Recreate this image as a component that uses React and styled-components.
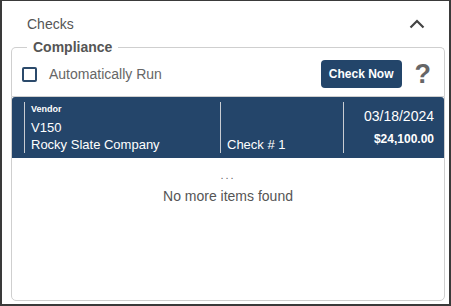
import React from 'react'
import styled, { createGlobalStyle } from 'styled-components'

const GlobalStyle = createGlobalStyle`
  html, body { margin: 0; padding: 0; background: #fff; }
  body { font-family: "Liberation Sans", Arial, sans-serif; }
`

const Panel = styled.div`
  box-sizing: border-box;
  width: 451px;
  height: 306px;
  border: 2px solid #3a3a3a;
  border-top-width: 1px;
  display: flex;
  flex-direction: column;
  padding: 0 4px 3px 9px;
`

const Header = styled.div`
  display: flex;
  align-items: center;
  justify-content: space-between;
  height: 39px;
  padding: 6px 20px 0 16px;
  box-sizing: border-box;
  color: #555;
  font-size: 14px;
`

const Fieldset = styled.fieldset`
  margin: 0;
  padding: 6px 13px 8px 10px;
  border: 1px solid #cfcfcf;
  border-bottom: none;
  border-radius: 5px 5px 0 0;
  min-width: 0;
`

const Legend = styled.legend`
  padding: 0 6px;
  margin-left: 5px;
  font-weight: bold;
  font-size: 14px;
  line-height: 14px;
  color: #555;
`

const Row = styled.div`
  display: flex;
  align-items: center;
  gap: 12px;
`

const Box = styled.span`
  box-sizing: border-box;
  width: 15px;
  height: 15px;
  border: 2px solid #2b4a6b;
  border-radius: 2px;
`

const Label = styled.span`
  flex: 1;
  color: #666;
  font-size: 14px;
`

const Button = styled.button`
  height: 28px;
  padding: 0 8px;
  border: none;
  border-radius: 4px;
  background: #23456a;
  color: #fff;
  font-family: "Liberation Sans", Arial, sans-serif;
  font-weight: bold;
  font-size: 12px;
`

const Help = styled.span`
  font-weight: bold;
  font-size: 27px;
  color: #666;
  margin-left: 1px;
  line-height: 1;
`

const List = styled.div`
  flex: 1;
  border: 1px solid #cfcfcf;
  border-radius: 0 0 5px 5px;
  display: flex;
  flex-direction: column;
  align-items: center;
`

const Item = styled.div`
  align-self: stretch;
  display: grid;
  grid-template-columns: 196px 123px 1fr;
  height: 61px;
  padding: 5px 0 5px 12px;
  box-sizing: border-box;
  background: #24456a;
  color: #fff;
  border-radius: 3px 3px 0 0;
`

const Cell = styled.div`
  border-left: 1px solid #c8ccd2;
  padding: ${p => (p.$right ? '4px 10px 0' : '0 6px')};
  display: flex;
  flex-direction: column;
  align-items: ${p => (p.$right ? 'flex-end' : 'flex-start')};
  justify-content: ${p => (p.$right ? 'flex-start' : 'flex-end')};
  font-size: 13px;
  line-height: 17px;
`

const Small = styled.div`
  font-size: 9px;
  font-weight: bold;
  line-height: 12px;
  margin-bottom: 4px;
`

const Date = styled.div`
  font-size: 14px;
  line-height: 20px;
`

const Amount = styled.div`
  font-size: 12px;
  font-weight: bold;
  line-height: 26px;
`

const Dots = styled.div`
  margin-top: 11px;
  color: #666;
  font-size: 11px;
  letter-spacing: 2px;
  line-height: 12px;
`

const Empty = styled.div`
  margin-top: 5px;
  color: #555;
  font-size: 14px;
  line-height: 20px;
`

const Chevron = () => (
  <svg width="16" height="10" viewBox="0 0 16 10" fill="none">
    <path d="M1.5 8.5 L8 2 L14.5 8.5" stroke="#444" strokeWidth="2.2" />
  </svg>
)

export default function App() {
  return (
    <>
      <GlobalStyle />
      <Panel>
        <Header>
          <span>Checks</span>
          <Chevron />
        </Header>
        <Fieldset>
          <Legend>Compliance</Legend>
          <Row>
            <Box />
            <Label>Automatically Run</Label>
            <Button>Check Now</Button>
            <Help>?</Help>
          </Row>
        </Fieldset>
        <List>
          <Item>
            <Cell>
              <Small>Vendor</Small>
              <div>V150</div>
              <div>Rocky Slate Company</div>
            </Cell>
            <Cell>
              <div>Check # 1</div>
            </Cell>
            <Cell $right>
              <Date>03/18/2024</Date>
              <Amount>$24,100.00</Amount>
            </Cell>
          </Item>
          <Dots>...</Dots>
          <Empty>No more items found</Empty>
        </List>
      </Panel>
    </>
  )
}
